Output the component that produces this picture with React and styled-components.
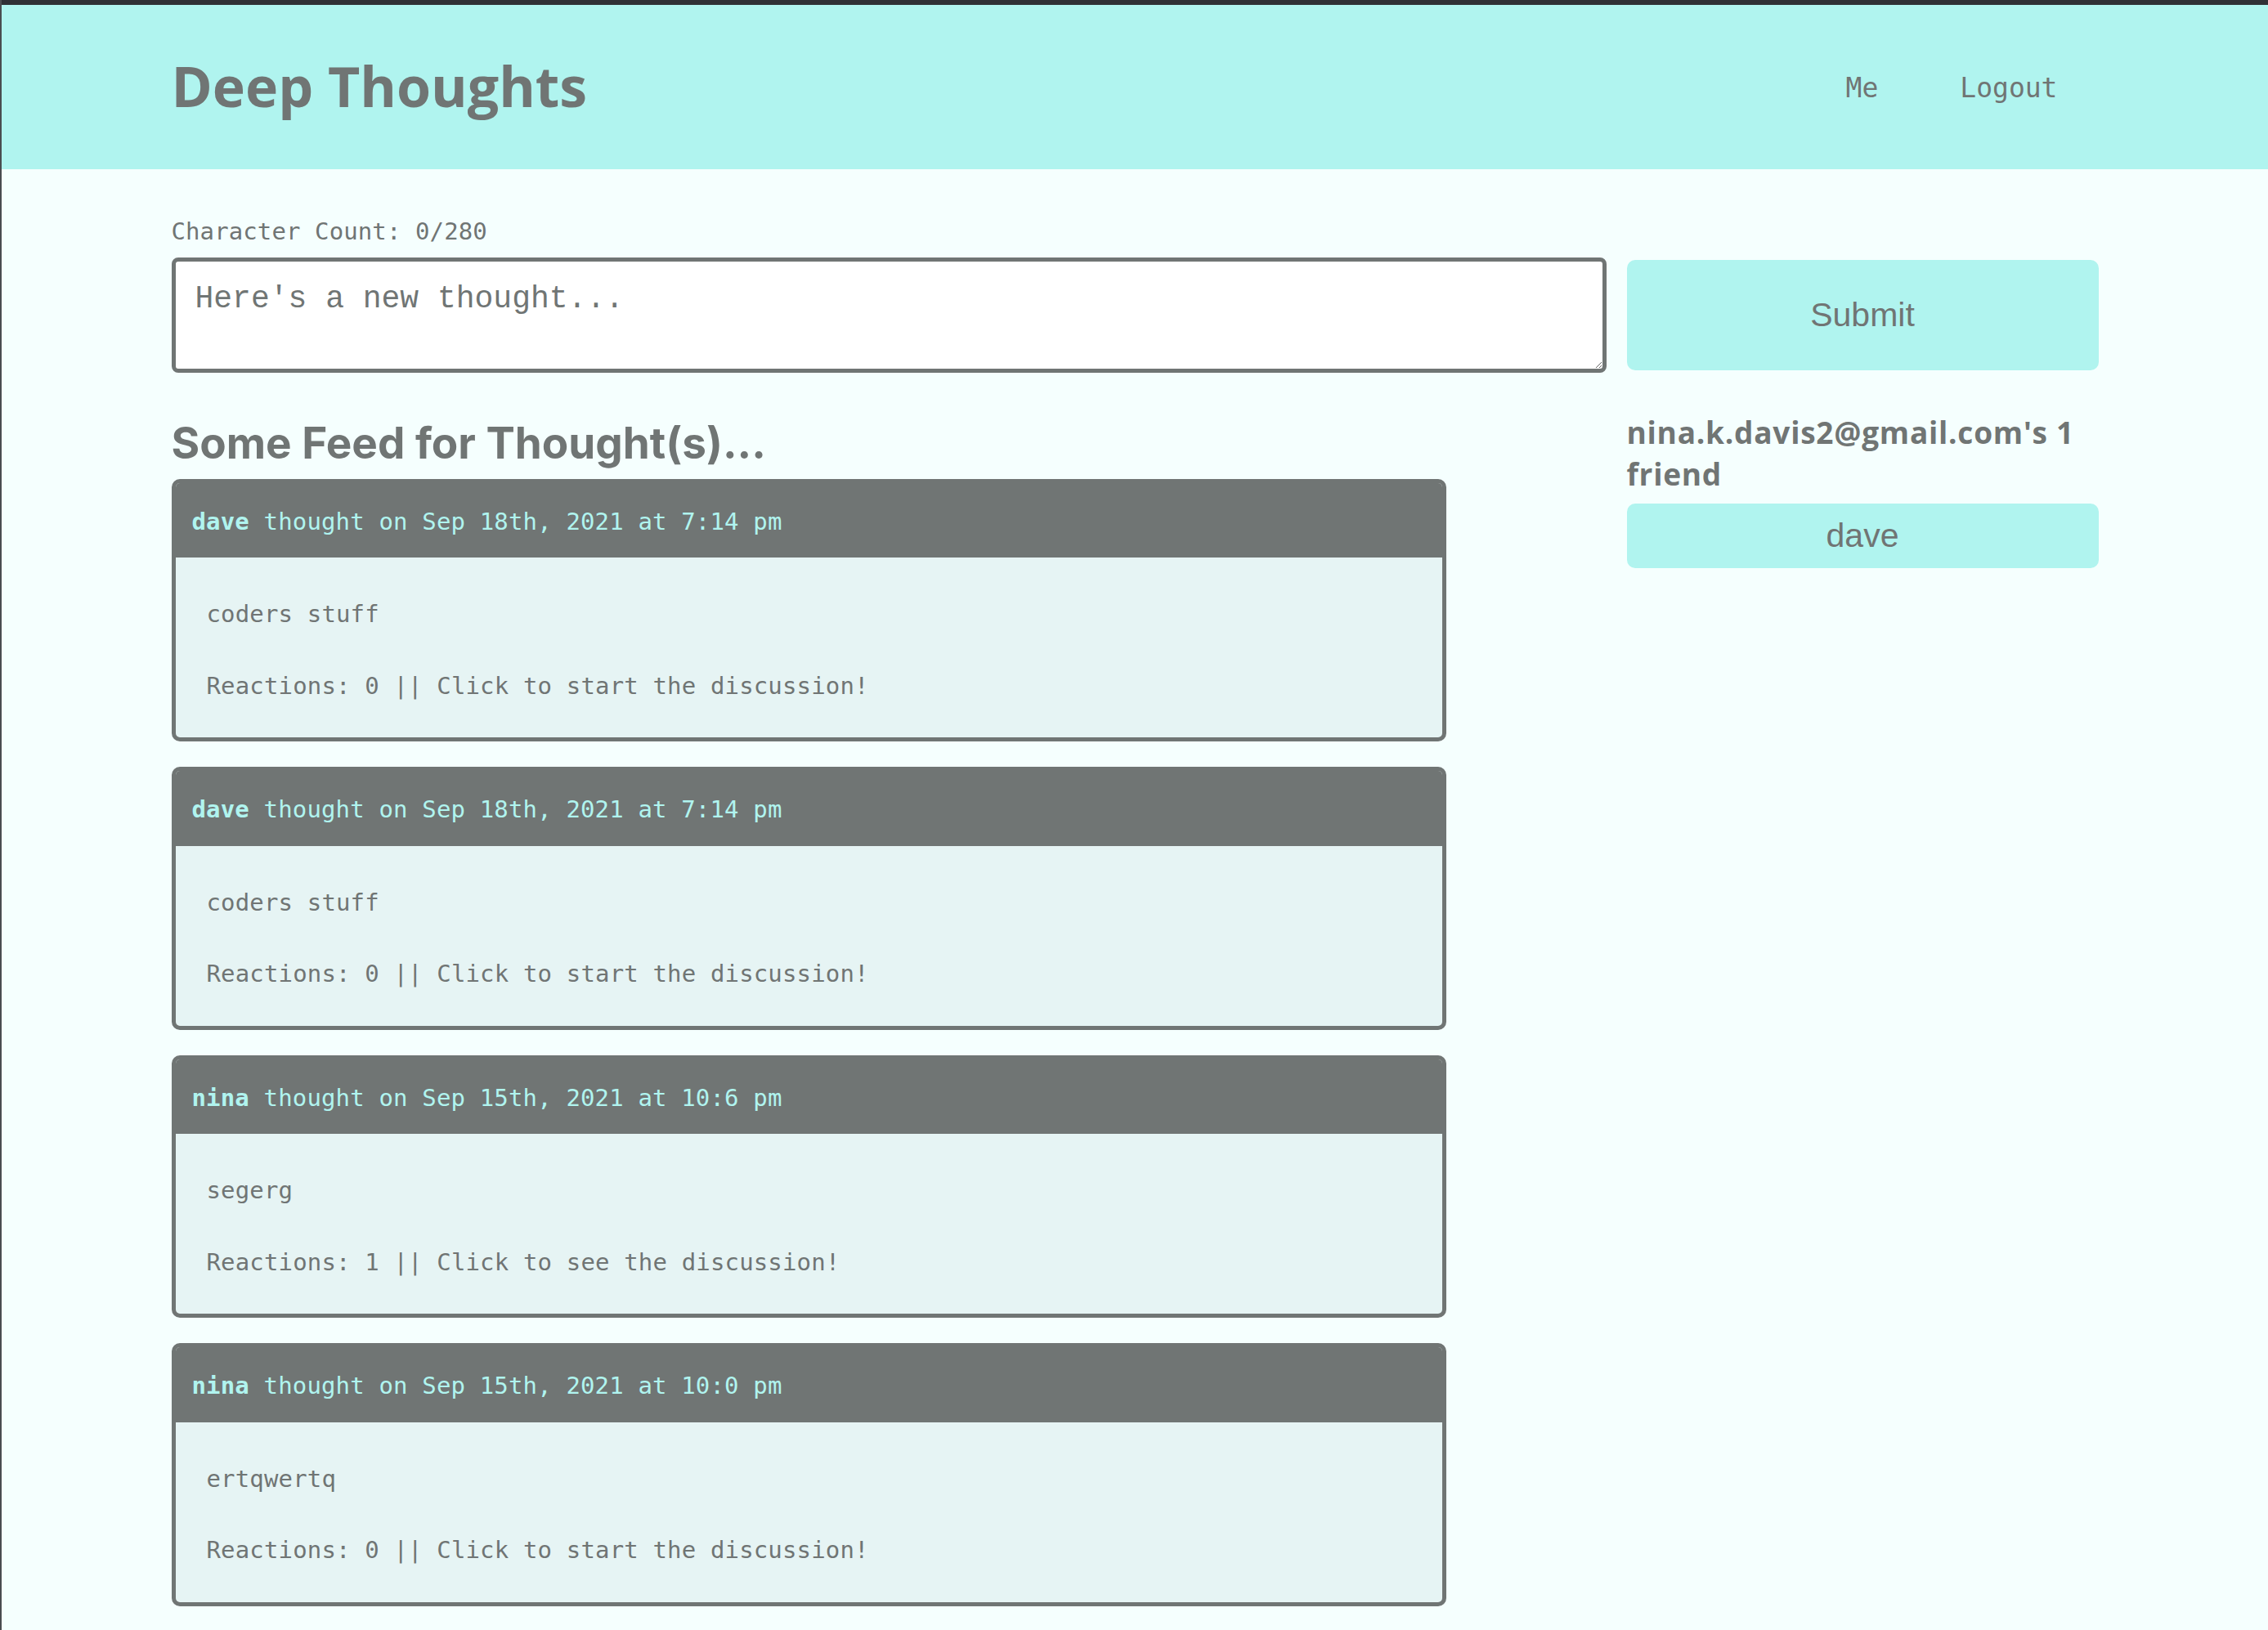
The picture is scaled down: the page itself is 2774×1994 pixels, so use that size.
import React from "react";
import styled, { createGlobalStyle } from "styled-components";

const GRAY = "#707574";
const CYAN = "#b0f4ef";

const GlobalStyle = createGlobalStyle`
  html, body {
    margin: 0;
    padding: 0;
  }
  body {
    background: #f5fffe;
    border-left: 2px solid #4a4d50;
    min-height: 100vh;
    box-sizing: border-box;
    font-family: "DejaVu Sans Mono", monospace;
    color: ${ GRAY };
  }
`;

const Header = styled.header`
  background: ${ CYAN };
  border-top: 6px solid #2f3035;
  height: 201px;
  display: flex;
  align-items: center;
`;

const Container = styled.div`
  width: 2357px;
  margin: 0 auto;
`;

const HeaderInner = styled(Container)`
  display: flex;
  align-items: center;
  justify-content: space-between;
`;

const Brand = styled.h1`
  margin: 0;
  font-family: "Open Sans", sans-serif;
  font-weight: 700;
  font-size: 68px;
  line-height: 1;
  color: ${ GRAY };
  padding-bottom: 3px;
`;

const Nav = styled.nav`
  display: flex;
  padding-top: 2px;
`;

const NavLink = styled.a`
  margin: 0 50px;
  font-family: "DejaVu Sans Mono", monospace;
  font-size: 33px;
  color: ${ GRAY };
  text-decoration: none;
`;

const Main = styled(Container)`
  padding-top: 55px;
`;

const CharCount = styled.p`
  margin: 0 0 9px;
  font-size: 29px;
  letter-spacing: 0.1px;
  line-height: 1.5;
`;

const Form = styled.form`
  display: grid;
  grid-template-columns: 1fr 577px;
  column-gap: 25px;
  align-items: center;
`;

const ThoughtInput = styled.textarea`
  box-sizing: border-box;
  height: 141px;
  padding: 24px;
  border: 5px solid ${ GRAY };
  border-radius: 8px;
  background: #fff;
  font-family: "Liberation Mono", monospace;
  font-size: 38px;
  color: ${ GRAY };
  &::placeholder {
    color: ${ GRAY };
    opacity: 1;
  }
`;

const CyanButton = styled.button`
  width: 100%;
  border: none;
  border-radius: 10px;
  background: ${ CYAN };
  color: ${ GRAY };
  font-family: "Liberation Sans", Arial, sans-serif;
  font-size: 41px;
  cursor: pointer;
`;

const SubmitButton = styled(CyanButton)`
  height: 135px;
`;

const Row = styled.div`
  display: flex;
  justify-content: space-between;
  align-items: flex-start;
  margin-top: 47px;
`;

const FeedColumn = styled.section`
  width: 1559px;
`;

const FeedTitle = styled.h3`
  margin: 8px 0 13px;
  font-family: "Inter", sans-serif;
  font-weight: 700;
  font-size: 53px;
  line-height: 62px;
  color: ${ GRAY };
`;

const ThoughtCard = styled.article`
  border: 5px solid ${ GRAY };
  border-radius: 10px;
  overflow: hidden;
  background: #e6f4f4;
  & + & {
    margin-top: 31px;
  }
`;

const CardHeader = styled.p`
  margin: 0;
  padding: 26px 20px 22px;
  background: ${ GRAY };
  color: ${ CYAN };
  font-size: 29px;
  letter-spacing: 0.15px;
  line-height: 1.5;
`;

const Username = styled.strong`
  font-weight: 700;
`;

const CardBody = styled.div`
  display: flex;
  flex-direction: column;
  gap: 44px;
  padding: 48px 38px 41px;
`;

const CardText = styled.p`
  margin: 0;
  font-size: 29px;
  letter-spacing: 0.15px;
  line-height: 1.5;
  color: ${ GRAY };
`;

const FriendColumn = styled.aside`
  width: 577px;
`;

const FriendHeading = styled.h5`
  margin: 0 0 11px;
  font-family: "Open Sans", sans-serif;
  font-weight: 700;
  font-size: 37px;
  letter-spacing: 0.75px;
  line-height: 51px;
  color: ${ GRAY };
`;

const FriendButton = styled(CyanButton)`
  height: 79px;
`;

const thoughts = [
  { id: 1, user: "dave", date: "Sep 18th, 2021 at 7:14 pm", text: "coders stuff", reactions: 0 },
  { id: 2, user: "dave", date: "Sep 18th, 2021 at 7:14 pm", text: "coders stuff", reactions: 0 },
  { id: 3, user: "nina", date: "Sep 15th, 2021 at 10:6 pm", text: "segerg", reactions: 1 },
  { id: 4, user: "nina", date: "Sep 15th, 2021 at 10:0 pm", text: "ertqwertq", reactions: 0 },
];

function App () {
  return (
    <>
      <GlobalStyle />
      <Header>
        <HeaderInner>
          <Brand>Deep Thoughts</Brand>
          <Nav>
            <NavLink href="#me">Me</NavLink>
            <NavLink href="#logout">Logout</NavLink>
          </Nav>
        </HeaderInner>
      </Header>
      <Main>
        <CharCount>Character Count: 0/280</CharCount>
        <Form onSubmit={ ( e ) => e.preventDefault() }>
          <ThoughtInput placeholder="Here's a new thought..." />
          <SubmitButton type="submit">Submit</SubmitButton>
        </Form>
        <Row>
          <FeedColumn>
            <FeedTitle>Some Feed for Thought(s)...</FeedTitle>
            { thoughts.map( ( t ) => (
              <ThoughtCard key={ t.id }>
                <CardHeader>
                  <Username>{ t.user }</Username> thought on { t.date }
                </CardHeader>
                <CardBody>
                  <CardText>{ t.text }</CardText>
                  <CardText>
                    Reactions: { t.reactions } || Click to{ " " }
                    { t.reactions ? "see" : "start" } the discussion!
                  </CardText>
                </CardBody>
              </ThoughtCard>
            ) ) }
          </FeedColumn>
          <FriendColumn>
            <FriendHeading>nina.k.davis2@gmail.com's 1 friend</FriendHeading>
            <FriendButton>dave</FriendButton>
          </FriendColumn>
        </Row>
      </Main>
    </>
  );
}

export default App;
